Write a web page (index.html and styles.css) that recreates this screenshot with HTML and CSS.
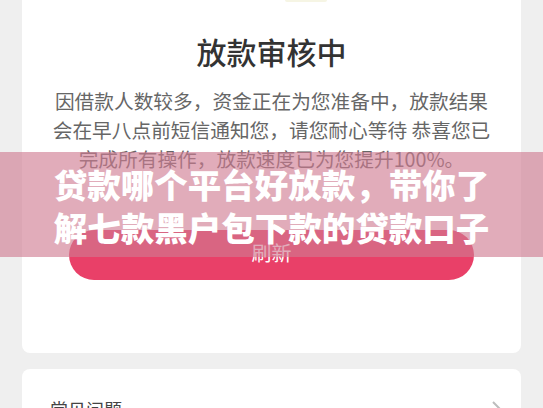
FILE: index.html
```html
<!DOCTYPE html>
<html lang="zh-CN">
<head>
  <meta charset="UTF-8">
  <title>放款审核中</title>
  <meta name="viewport" content="width=device-width, initial-scale=1.0">
  <link rel="stylesheet" href="styles.css">
</head>
<body>

<div class="page">
  <div class="card">
    <div class="card-art"></div>
    <h1 class="title">放款审核中</h1>
    <p class="desc">
      因借款人数较多，资金正在为您准备中，放款结果<br>
      会在早八点前短信通知您，请您耐心等待 恭喜您已<br>
      完成所有操作，放款速度已为您提升100%。
    </p>
    <div class="btn">刷新</div>
  </div>

  <div class="card faq">
    <span class="faq-label">常见问题</span>
    <svg class="chev" width="12" height="18" viewBox="0 0 12 18">
      <polyline points="2,2 9,9 2,16" fill="none" stroke="#bdbdbd" stroke-width="2"/>
    </svg>
  </div>
</div>

<!-- 标题横幅，盖在卡片上 -->
<div class="banner">
  <div class="banner-text">贷款哪个平台好放款，带你了<br>解七款黑户包下款的贷款口子</div>
</div>

</body>
</html>
```

FILE: styles.css
```css
body {
  margin: 0;
  background: #efefef;
  font-family: "Noto Sans CJK SC", "Noto Sans", sans-serif;
}

.page {
  padding: 0 22px;
}

.card {
  background: #fff;
  border-radius: 0 0 8px 8px;
  padding: 0 47px 73px;
}

.card-art {
  width: 42px;
  height: 2px;
  margin-left: 216px;
  background: #f6f5e4;
  border-radius: 0 0 20px 20px;
}

.title {
  margin: 28px 0 0;
  font-size: 30px;
  line-height: 42px;
  font-weight: 500;
  color: #333;
  text-align: center;
}

.desc {
  margin: 14px -20px 0;
  font-size: 19.7px;
  line-height: 29px;
  color: #666;
  text-align: center;
}

.btn {
  margin-top: 57px;
  height: 50px;
  line-height: 46px;
  border-radius: 25px;
  background: #e94068;
  color: #fff;
  font-size: 20px;
  text-align: center;
}

.faq {
  margin-top: 16px;
  border-radius: 8px;
  padding: 27px 22px 20px 28px;
  display: flex;
  justify-content: space-between;
  align-items: center;
}

.faq-label {
  font-size: 18px;
  line-height: 26px;
  color: #444;
}

.chev {
  margin-right: -4px;
}

.banner {
  position: absolute;
  top: 152px;
  left: 0;
  right: 0;
  height: 105px;
  background: rgba(208, 124, 146, 0.63);
  display: flex;
  align-items: center;
  justify-content: center;
}

.banner-text {
  color: #fff;
  font-size: 33.5px;
  line-height: 43px;
  font-weight: 900;
  text-align: center;
}
```
